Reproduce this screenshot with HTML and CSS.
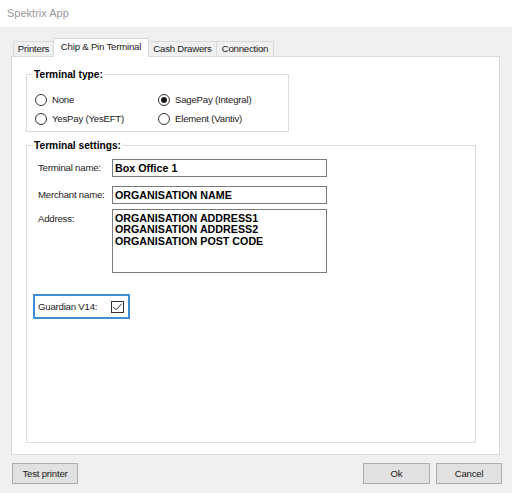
FILE: index.html
```html
<!DOCTYPE html>
<html lang="en">
<head>
<meta charset="utf-8">
<title>Spektrix App</title>
<link rel="stylesheet" href="styles.css">
</head>
<body>
<div class="titlebar">Spektrix App</div>
<div class="window">
  <div class="tabs">
    <div class="tab w-printers">Printers</div>
    <div class="tab active w-chip">Chip &amp; Pin Terminal</div>
    <div class="tab w-cash">Cash Drawers</div>
    <div class="tab w-conn">Connection</div>
  </div>
  <div class="panel">
    <div class="group type">
      <div class="group-title">Terminal type:</div>
      <div class="radios">
        <div class="radio"><span class="circle"></span>None</div>
        <div class="radio"><span class="circle on"></span>SagePay (Integral)</div>
        <div class="radio"><span class="circle"></span>YesPay (YesEFT)</div>
        <div class="radio"><span class="circle"></span>Element (Vantiv)</div>
      </div>
    </div>
    <div class="group settings">
      <div class="group-title">Terminal settings:</div>
      <div class="row r1"><span class="lbl">Terminal name:</span><div class="field">Box Office 1</div></div>
      <div class="row r2"><span class="lbl">Merchant name:</span><div class="field">ORGANISATION NAME</div></div>
      <div class="row addr"><span class="lbl">Address:</span><div class="field area">ORGANISATION ADDRESS1<br>ORGANISATION ADDRESS2<br>ORGANISATION POST CODE</div></div>
      <div class="guardian"><span class="glbl">Guardian V14:</span><span class="check"><svg width="11" height="10" viewBox="0 0 11 10"><path d="M1.5 5 L4.2 7.8 L9.6 1.8" fill="none" stroke="#333" stroke-width="1"/></svg></span></div>
    </div>
  </div>
  <div class="buttons">
    <div class="btn w-test">Test printer</div>
    <div class="btn w-ok push">Ok</div>
    <div class="btn w-cancel">Cancel</div>
  </div>
</div>
</body>
</html>
```
FILE: styles.css
```css
* { box-sizing: border-box; }
body {
  margin: 0;
  width: 512px;
  height: 493px;
  overflow: hidden;
  background: #f0f0f0;
  font-family: "Liberation Sans", Arial, sans-serif;
  font-size: 9.6px;
  letter-spacing: -0.2px;
  color: #1a1a1a;
}
.titlebar {
  height: 27px;
  background: #fff;
  padding-left: 7px;
  font-size: 11px;
  letter-spacing: 0;
  line-height: 27px;
  color: #999;
}
.window { padding: 11px 11px 0 11px; }
.tabs {
  display: flex;
  align-items: flex-end;
  height: 18px;
  padding-left: 2px;
}
.tab {
  height: 15px;
  border: 1px solid #d9d9d9;
  border-bottom: none;
  background: #f0f0f0;
  text-align: center;
  line-height: 13px;
  white-space: nowrap;
}
.tab + .tab { margin-left: -1px; }
.tab.active {
  height: 19px;
  margin-bottom: -1px;
  background: #fff;
  position: relative;
  z-index: 1;
  line-height: 16px;
}
.w-printers { width: 41px; }
.w-chip { width: 96px; }
.w-cash { width: 69px; }
.w-conn { width: 58px; }
.panel {
  width: 489px;
  height: 399px;
  border: 1px solid #d9d9d9;
  background: #fff;
  padding: 17px 0 0 14px;
}
.group { border: 1px solid #dcdcdc; }
.group-title {
  width: fit-content;
  margin-top: -6px;
  padding: 0 1px;
  background: #fff;
  font-weight: bold;
  font-size: 10.2px;
  letter-spacing: 0;
  line-height: 12px;
  color: #000;
}
.type { width: 263px; height: 58px; padding-left: 8px; }
.type .group-title { margin-left: -2px; }
.radios {
  display: grid;
  grid-template-columns: 123px auto;
  grid-auto-rows: 19px;
  margin-top: 9px;
}
.radio { display: flex; align-items: center; gap: 5px; }
.circle {
  width: 12px;
  height: 12px;
  border: 1px solid #333;
  border-radius: 50%;
  display: flex;
  align-items: center;
  justify-content: center;
  background: #fff;
}
.circle.on::after {
  content: "";
  width: 6px;
  height: 6px;
  border-radius: 50%;
  background: #1a1a1a;
}
.settings { width: 450px; height: 298px; margin-top: 13px; padding-left: 11px; }
.settings .group-title { margin-left: -5px; }
.row { display: flex; align-items: center; }
.r1 { margin-top: 7px; }
.r2 { margin-top: 9px; }
.addr { margin-top: 5px; align-items: flex-start; }
.lbl { width: 74px; line-height: 12px; }
.addr .lbl { margin-top: 4px; }
.field {
  width: 215px;
  height: 18px;
  border: 1px solid #7a7a7a;
  padding-left: 2px;
  font-weight: bold;
  font-size: 10.7px;
  letter-spacing: 0;
  line-height: 16px;
  color: #000;
  white-space: nowrap;
}
.field.area { height: 64px; padding-top: 3px; line-height: 11.4px; }
.guardian {
  display: flex;
  align-items: center;
  width: 97px;
  height: 25px;
  margin: 21px 0 0 -5px;
  border: 2px solid #3d8fd1;
  padding-left: 3px;
}
.glbl { width: 73px; }
.check {
  width: 13px;
  height: 12px;
  border: 1px solid #333;
  display: flex;
  align-items: center;
  justify-content: center;
}
.check svg { display: block; }
.buttons { display: flex; margin: 8px -1px 0 1px; }
.btn {
  height: 21px;
  border: 1px solid #adadad;
  background: #e1e1e1;
  text-align: center;
  line-height: 19px;
}
.w-test { width: 66px; }
.w-ok { width: 67px; }
.w-cancel { width: 66px; margin-left: 6px; }
.push { margin-left: auto; }
```
